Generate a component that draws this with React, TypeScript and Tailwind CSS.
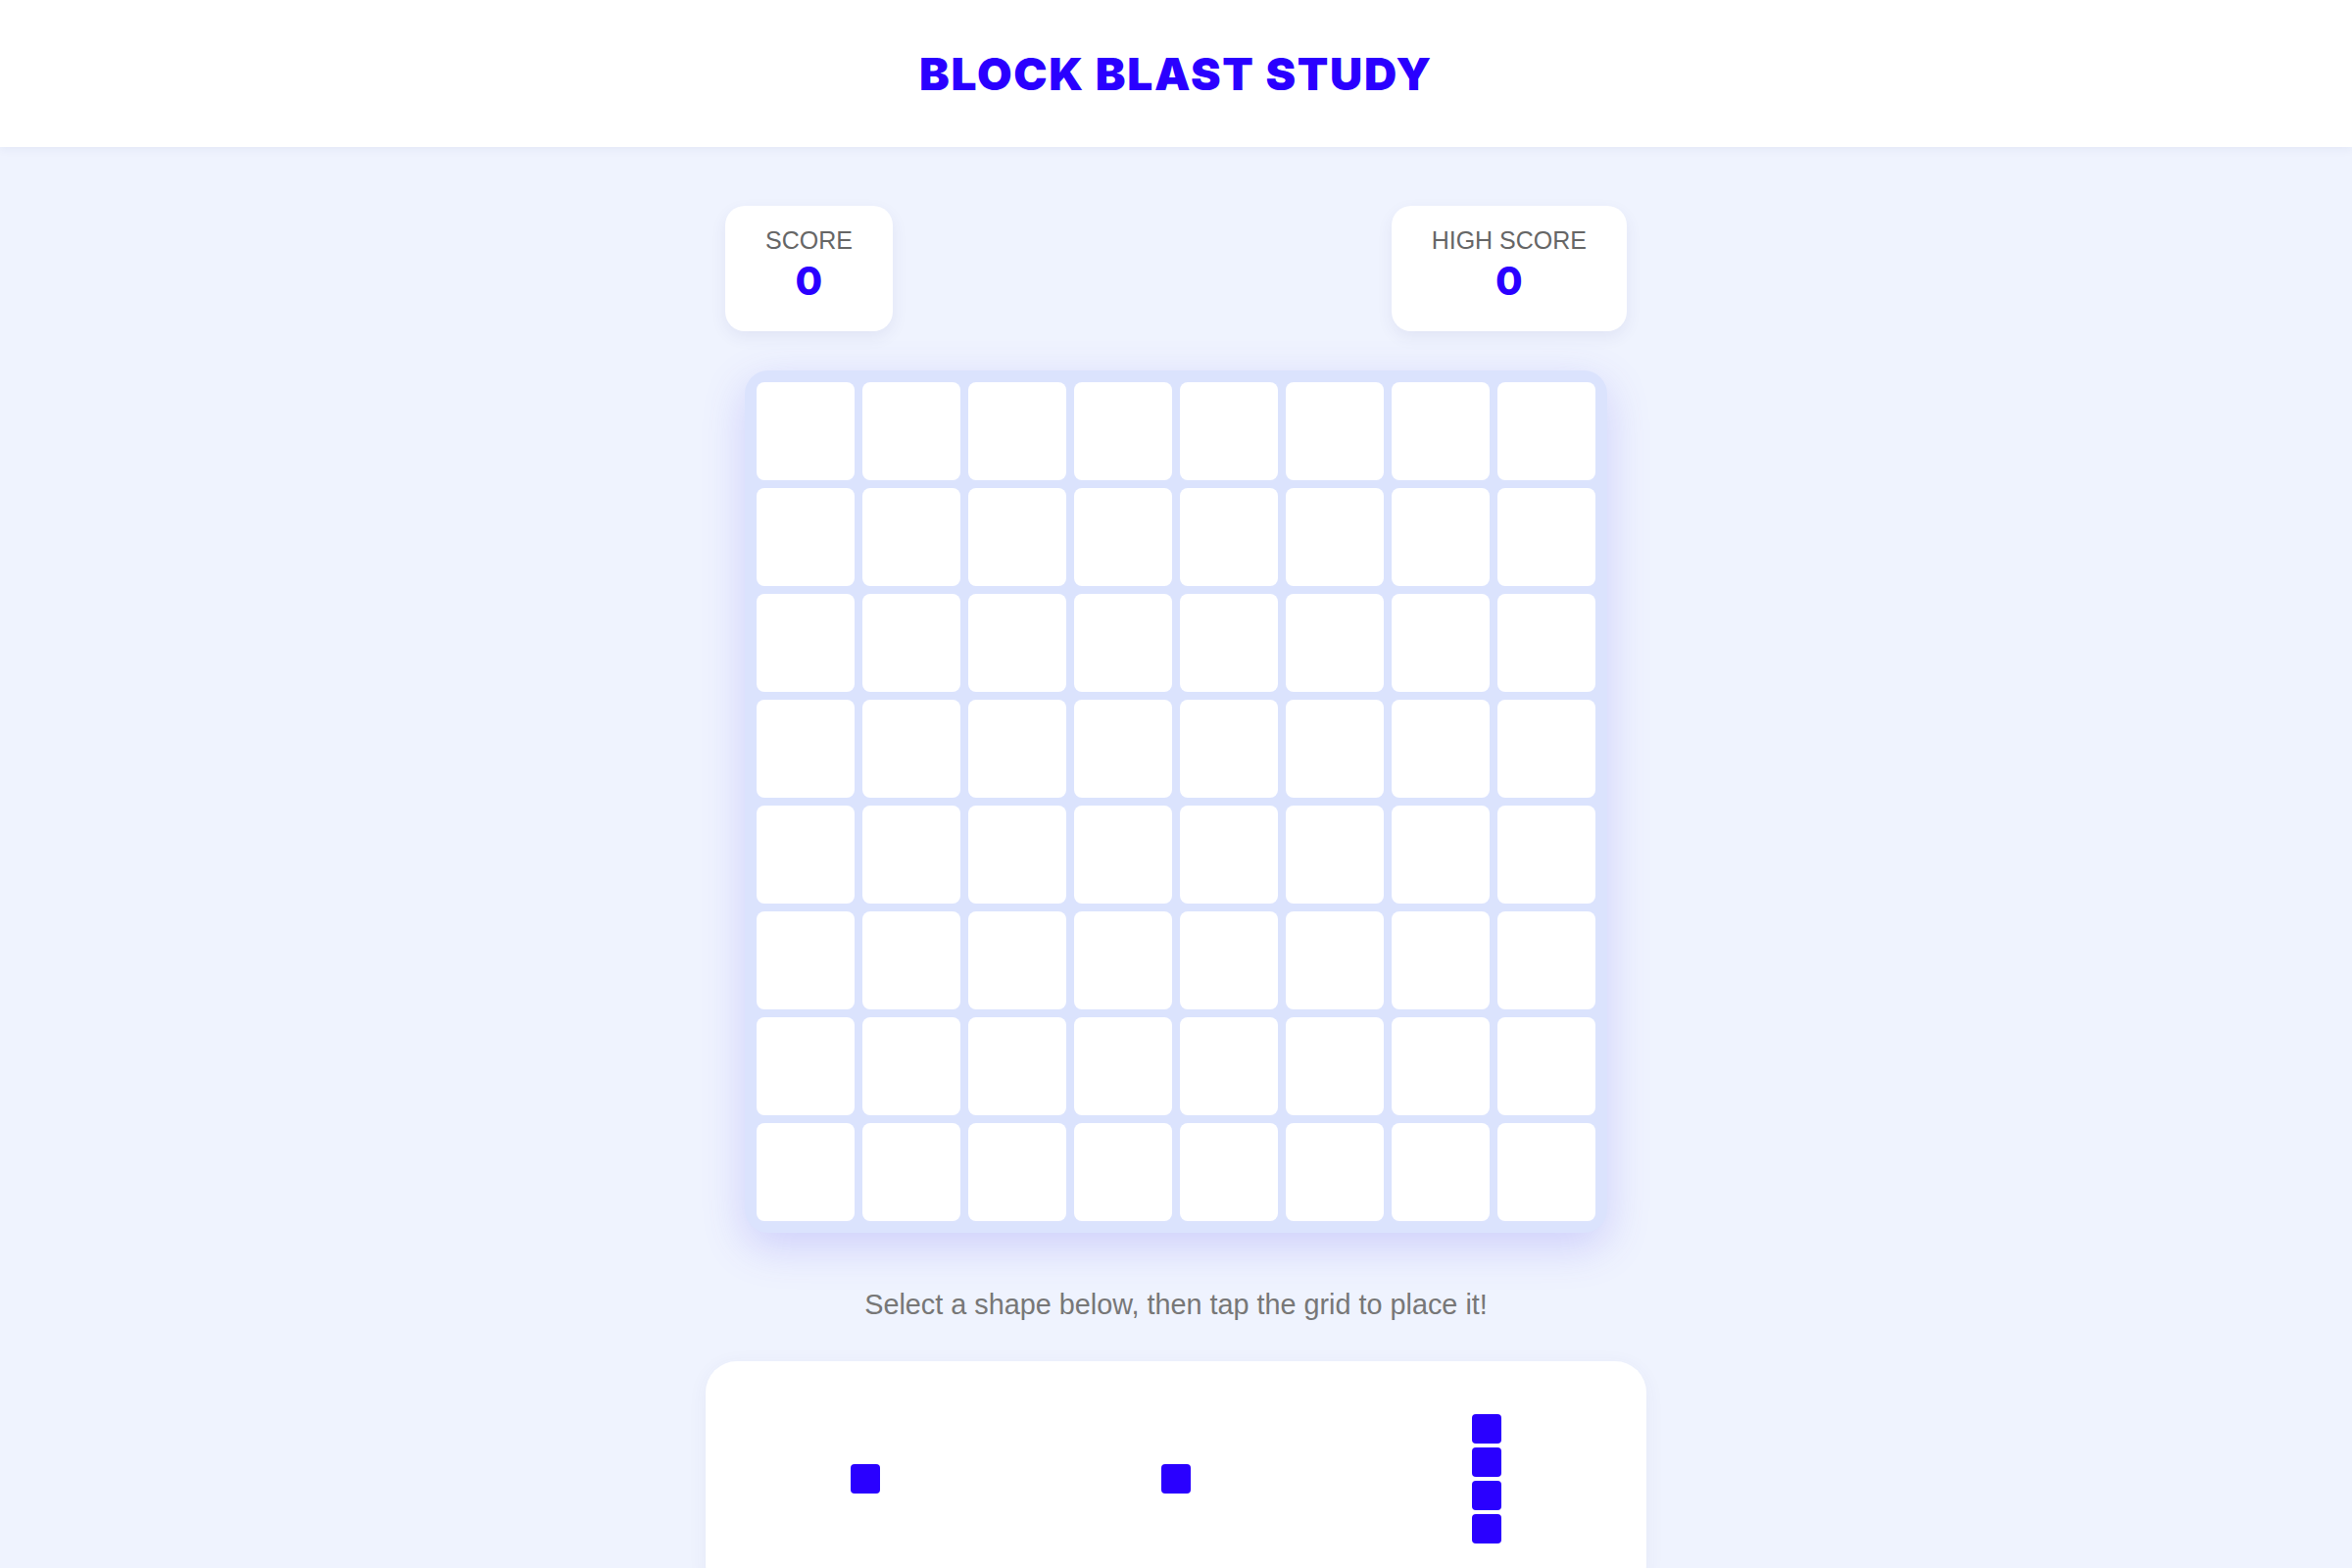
import React from "react";

function ScoreCard({ label, value }: { label: string; value: number }) {
  return (
    <div className="flex flex-col items-center rounded-[20px] bg-white px-[41px] pt-[21px] pb-[27px] shadow-[0_6px_16px_rgba(60,70,140,0.08)]">
      <div className="h-[29px] text-[25px] leading-[29px] text-[#666666] [font-family:'Liberation_Sans',Arial,sans-serif]">
        {label}
      </div>
      <div className="mt-[3px] h-[48px] text-[40px] leading-[48px] font-extrabold text-[#2a00ff] [font-family:Inter,'Noto_Sans',sans-serif]">
        {value}
      </div>
    </div>
  );
}

function Block() {
  return <div className="h-[30px] w-[30px] rounded-[4px] bg-[#2a00ff]" />;
}

export default function App() {
  const cells = Array.from({ length: 64 });
  return (
    <div className="min-h-screen bg-[#eff3fe] [font-family:'Liberation_Sans',Arial,sans-serif]">
      <header className="relative z-10 flex h-[150px] items-center justify-center bg-white shadow-[0_2px_10px_rgba(40,50,120,0.06)]">
        <h1 className="text-[46px] font-black tracking-[1.7px] text-[#2a00ff] [font-family:Inter,'Noto_Sans',sans-serif]">
          BLOCK BLAST STUDY
        </h1>
      </header>
      <main className="flex flex-col items-center pt-[60px]">
        <div className="flex w-[920px] items-start justify-between">
          <ScoreCard label="SCORE" value={0} />
          <ScoreCard label="HIGH SCORE" value={0} />
        </div>
        <div className="mt-[40px] grid grid-cols-8 gap-[8px] rounded-[24px] bg-[#dbe3fd] p-[12px] shadow-[0_14px_44px_rgba(90,80,240,0.22)]">
          {cells.map((_, i) => (
            <div key={i} className="h-[100px] w-[100px] rounded-[8px] bg-white" />
          ))}
        </div>
        <p className="mt-[57px] text-[28.8px] leading-[33px] text-[#777777]">
          Select a shape below, then tap the grid to place it!
        </p>
        <div className="mt-[41px] mb-[40px] grid w-[960px] grid-cols-3 rounded-[32px] bg-white px-[4.5px] py-[30px] shadow-[0_4px_20px_rgba(60,70,140,0.06)]">
          <div className="flex h-[180px] items-center justify-center">
            <Block />
          </div>
          <div className="flex h-[180px] items-center justify-center">
            <Block />
          </div>
          <div className="flex h-[180px] flex-col items-center justify-center gap-[4px]">
            <Block />
            <Block />
            <Block />
            <Block />
          </div>
        </div>
      </main>
    </div>
  );
}
